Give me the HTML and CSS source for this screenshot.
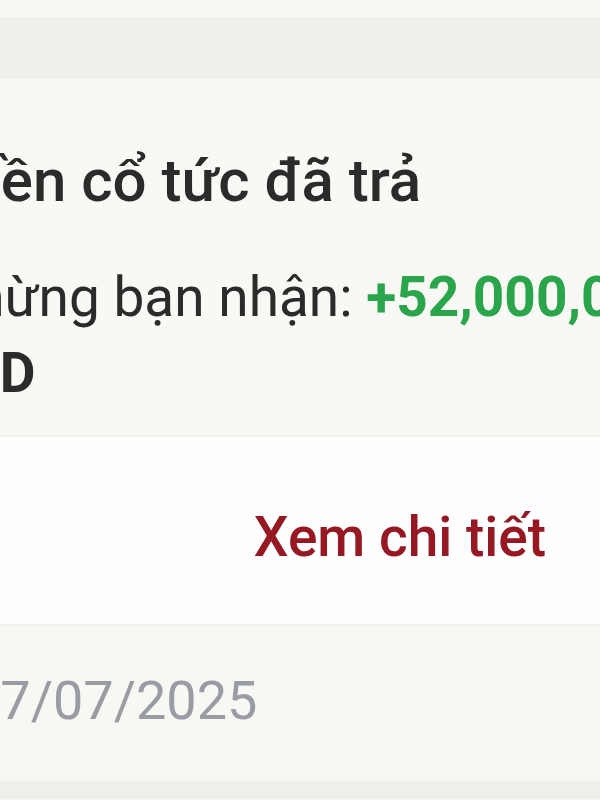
FILE: index.html
```html
<!DOCTYPE html>
<html lang="vi">
<head>
    <meta charset="UTF-8">
    <meta name="viewport" content="width=device-width, initial-scale=1.0">
    <title>Cổ tức</title>
    <link rel="stylesheet" href="styles.css">
</head>
<body>
    <div class="screen">
        <div class="top-gap"></div>
        <div class="band"></div>

        <div class="card">
            <h2 class="card-title">Tiền cổ tức đã trả</h2>
            <p class="card-text">Nhừng bạn nhận: <span class="amount">+52,000,000</span> <b>VND</b></p>
        </div>

        <div class="action">
            <a class="link" href="#">Xem chi tiết</a>
        </div>

        <div class="date-row">
            <span class="date">17/07/2025</span>
        </div>

        <div class="bottom-band"></div>
    </div>
</body>
</html>
```

FILE: styles.css
```css
html, body {
    margin: 0;
    padding: 0;
    overflow: hidden;
}
body {
    font-family: Roboto, "Noto Sans", sans-serif;
    background-color: #f7f7f3;
    color: #2b2b2b;
}
.screen {
    margin-left: -75px;
    width: 800px;
}
.top-gap {
    height: 17px;
}
.band {
    height: 62px;
    background-color: #f0f0eb;
}
.card {
    background-color: #f8f8f4;
    padding: 66px 20px 26px 0;
}
.card-title {
    margin: 0 0 42px 24px;
    font-size: 60px;
    line-height: 72px;
    font-weight: 500;
    color: #2b2b2b;
}
.card-text {
    margin: 0;
    font-size: 55px;
    line-height: 76px;
    text-indent: 10px;
    color: #2b2b2b;
}
.card-text b {
    font-weight: 700;
}
.amount {
    color: #2aa54b;
    font-weight: 700;
}
.action {
    display: flex;
    justify-content: flex-end;
    background-color: #fefefe;
    padding: 68px 179px 55px 0;
    box-shadow: 0 0 5px rgba(0, 0, 0, 0.07);
    position: relative;
}
.link {
    font-size: 55px;
    line-height: 64px;
    font-weight: 500;
    color: #951822;
    text-decoration: none;
}
.date-row {
    background-color: #f7f7f3;
    padding: 43px 20px 46px 45px;
}
.date {
    font-size: 54px;
    line-height: 68px;
    color: #9a9ca3;
}
.bottom-band {
    height: 18px;
    background-color: #efefea;
}
```
